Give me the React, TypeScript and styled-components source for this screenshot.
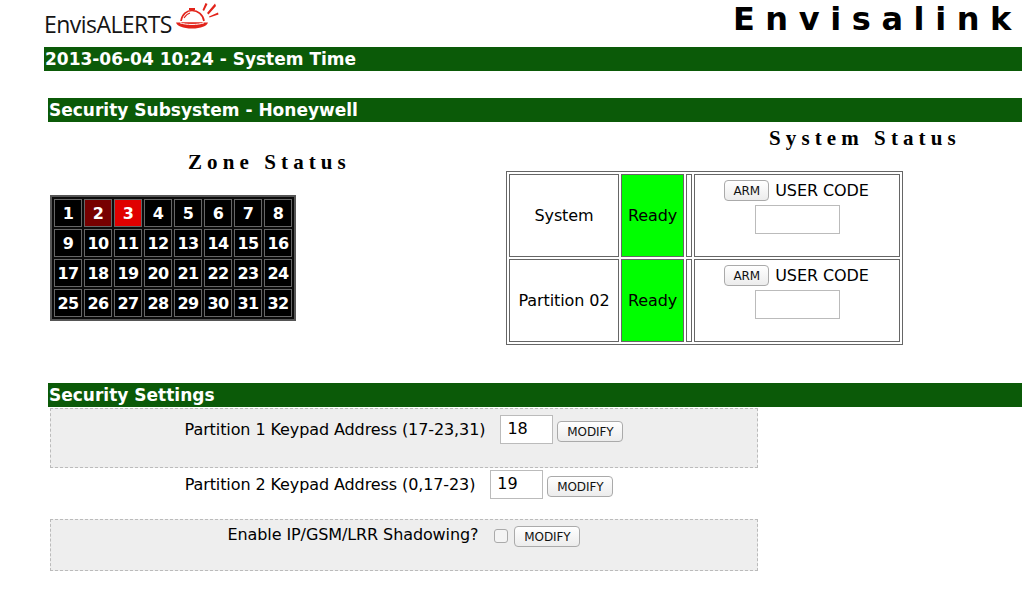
import React from "react";
import styled, { createGlobalStyle } from "styled-components";

const Global = createGlobalStyle`
  html, body { margin: 0; padding: 0; background: #fff; }
  body { width: 1022px; height: 593px; overflow: hidden; font-family: "DejaVu Sans", Verdana, sans-serif; color: #000; }
`;
const Page = styled.div`width: 1022px; height: 593px; overflow: hidden;`;
const Header = styled.header`display: flex; height: 47px; padding-left: 44px;`;
const Logo = styled.div`display: flex; width: 855px; height: 47px;`;
const LogoText = styled.span`font-family: "Open Sans", sans-serif; font-size: 23px; line-height: 24px; letter-spacing: -0.55px; margin-top: 12px; width: 130px; color: #151515;`;
const Title = styled.div`font-family: "DejaVu Sans", sans-serif; font-weight: 700; font-size: 32px; line-height: 38px; letter-spacing: 10.6px; white-space: nowrap;`;
const Bar = styled.h2<{ $left: number; $top: number }>`
  margin: ${p => p.$top}px 0 0 ${p => p.$left}px; height: 24px; padding-left: 1px; background: #0b5a08; color: #fff;
  font-family: "DejaVu Sans", sans-serif; font-weight: 700; font-size: 17px; line-height: 24px; white-space: nowrap;
`;
const Columns = styled.div`display: flex; height: 261px; padding-left: 50px;`;
const ZoneColumn = styled.section`width: 456px; padding-top: 27px;`;
const Heading = styled.h3<{ $indent: number }>`
  margin: 0 0 0 ${p => p.$indent}px; font-family: "Liberation Serif", serif; font-weight: 700; font-size: 21px; line-height: 26px; letter-spacing: 5.1px; white-space: nowrap;
`;
const ZoneGrid = styled.div`
  display: grid; grid-template-columns: repeat(8, 28px); grid-auto-rows: 28px; gap: 2px; width: max-content; margin-top: 20px; padding: 2px;
  background: #0a0a0a; border: 2px solid #555;
`;
const Zone = styled.div<{ $bg: string }>`
  display: flex; align-items: center; justify-content: center; background: ${p => p.$bg}; border: 1px solid #666; box-sizing: border-box;
  color: #fff; font-weight: 700; font-size: 16px; letter-spacing: -0.6px;
`;
const StatusColumn = styled.section`width: 466px; padding-top: 3px;`;
const StatusTable = styled.table`
  margin-top: 20px; border: 1px solid #666; border-spacing: 2px; border-collapse: separate; font-size: 16px; letter-spacing: -0.1px; table-layout: fixed;
`;
const Cell = styled.td<{ $w: number; $bg?: string }>`
  width: ${p => p.$w}px; height: 83px; padding: 0; box-sizing: border-box; border: 1px solid #666; text-align: center; white-space: nowrap; vertical-align: middle;
  background: ${p => p.$bg || "transparent"};
`;
const CodeCell = styled(Cell)`vertical-align: top;`;
const CodeLine = styled.div`display: flex; justify-content: center; align-items: center; gap: 6px; margin-top: 5px; height: 21px; padding-right: 1px;`;
const Btn = styled.button<{ $w: number }>`
  width: ${p => p.$w}px; height: 21px; padding: 0; border: 1px solid #aaa; border-radius: 4px; background: linear-gradient(#fff, #ececec); color: #111;
  font-family: "DejaVu Sans", sans-serif; font-size: 12px; box-sizing: border-box; flex: none; letter-spacing: -0.1px;
`;
const CodeInput = styled.input`display: block; width: 85px; height: 29px; margin: 4px auto 0 auto; padding: 0; box-sizing: border-box; border: 1px solid #bbb; background: #fff;`;
const Settings = styled.div`margin: 1px 0 0 50px; width: 708px;`;
const Row = styled.div<{ $h: number; $grey?: boolean; $shift: number }>`
  display: flex; justify-content: center; align-items: flex-start; box-sizing: border-box; height: ${p => p.$h}px; font-size: 16px; letter-spacing: -0.1px;
  padding-right: ${p => p.$shift}px;
  background: ${p => (p.$grey ? "#eee" : "#fff")}; border: 1px dashed ${p => (p.$grey ? "#bbb" : "transparent")};
`;
const Label = styled.span<{ $top: number }>`margin-top: ${p => p.$top}px; line-height: 20px; white-space: nowrap;`;
const ValueInput = styled.input<{ $top: number }>`
  width: 53px; height: 29px; margin: ${p => p.$top}px 4px 0 15px; padding: 0 0 3px 6px; box-sizing: border-box; border: 1px solid #bbb; background: #fff;
  font-family: "DejaVu Sans", sans-serif; font-size: 16px; color: #000;
`;
const Tick = styled.input`appearance: none; width: 14px; height: 14px; margin: 9px 6px 0 16px; border: 1px solid #aaa; border-radius: 3px; background: #f4f4f4;`;
const RowBtn = styled(Btn)<{ $top: number }>`margin-top: ${p => p.$top}px;`;

const Bell = () => (
  <svg width="46" height="32" viewBox="174 5 46 32" fill="none" aria-hidden="true">
    <path d="M181 26C182 19 187 15.5 192 15.5C198 15.5 203 19.5 204 26" stroke="#e2231a" strokeWidth="1.7" />
    <path d="M184 23C186 20 188 18.500 190 18" stroke="#e2231a" strokeWidth="1.2" />
    <path d="M189 13H195V15H193V16H191V15H189Z" fill="#e2231a" />
    <path d="M176 27.500C181 27 203 27 208 27.500C207 31 201 33.500 192 33.500C183 33.500 177 31 176 27.500Z" fill="#e2231a" />
    <path d="M180 27.800C186 30 198 30 204 27.800" stroke="#fff" strokeWidth="1" />
    <path d="M202.500 15L205.500 8L207.500 9L204 16Z M207 18L215 8.500L216 11L208.500 19.500Z M209 21.500L218 17.500L218.500 19.500L209.500 22.500Z" fill="#e2231a" />
  </svg>
);

const hot: Record<number, string> = { 2: "#770000", 3: "#e00000" };
const systems = ["System", "Partition 02"];

export default function App() {
  return (
    <Page>
      <Global />
      <Header>
        <Logo><LogoText>EnvisALERTS</LogoText><Bell /></Logo>
        <Title>Envisalink</Title>
      </Header>
      <Bar $left={44} $top={0}>2013-06-04 10:24 - System Time</Bar>
      <Bar $left={48} $top={27}>Security Subsystem - Honeywell</Bar>
      <Columns>
        <ZoneColumn>
          <Heading $indent={138}>Zone Status</Heading>
          <ZoneGrid>
            {Array.from({ length: 32 }, (_, i) => (
              <Zone key={i} $bg={hot[i + 1] || "#000"}>{i + 1}</Zone>
            ))}
          </ZoneGrid>
        </ZoneColumn>
        <StatusColumn>
          <Heading $indent={263}>System Status</Heading>
          <StatusTable>
            <tbody>
              {systems.map(name => (
                <tr key={name}>
                  <Cell $w={110}>{name}</Cell>
                  <Cell $w={63} $bg="#00ff00">Ready</Cell>
                  <Cell $w={6} />
                  <CodeCell $w={206}>
                    <CodeLine><Btn $w={45}>ARM</Btn>USER CODE</CodeLine>
                    <CodeInput />
                  </CodeCell>
                </tr>
              ))}
            </tbody>
          </StatusTable>
        </StatusColumn>
      </Columns>
      <Bar $left={48} $top={0}>Security Settings</Bar>
      <Settings>
        <Row $h={60} $grey $shift={0}>
          <Label $top={11}>Partition 1 Keypad Address (17-23,31)</Label>
          <ValueInput $top={6} defaultValue="18" />
          <RowBtn $w={66} $top={12}>MODIFY</RowBtn>
        </Row>
        <Row $h={51} $shift={10}>
          <Label $top={6}>Partition 2 Keypad Address (0,17-23)</Label>
          <ValueInput $top={1} defaultValue="19" />
          <RowBtn $w={66} $top={7}>MODIFY</RowBtn>
        </Row>
        <Row $h={52} $grey $shift={0}>
          <Label $top={5}>Enable IP/GSM/LRR Shadowing?</Label>
          <Tick type="checkbox" />
          <RowBtn $w={66} $top={6}>MODIFY</RowBtn>
        </Row>
      </Settings>
    </Page>
  );
}
